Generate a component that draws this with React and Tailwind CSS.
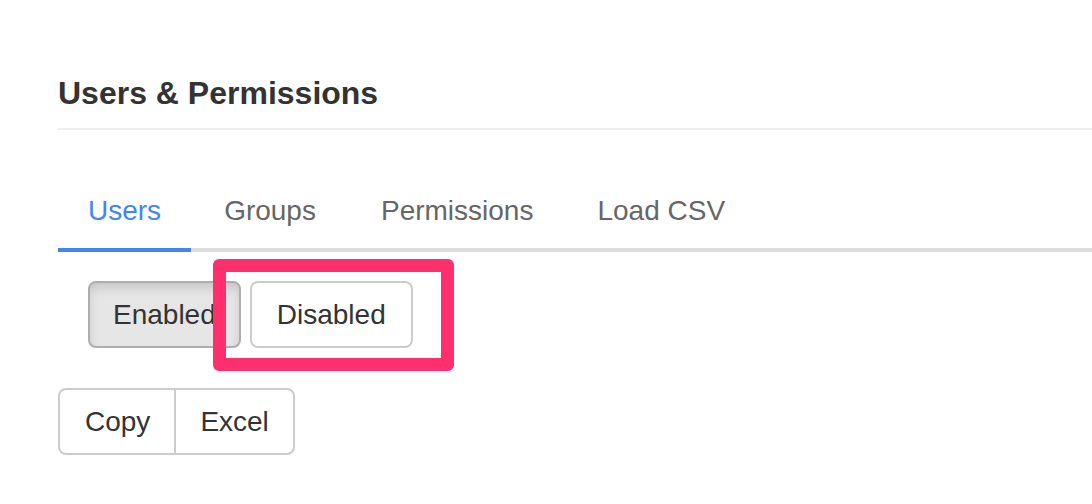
export default function App() {
  const font = { fontFamily: '"Liberation Sans", Arial, Helvetica, sans-serif' };
  return (
    <div className="w-[1092px] h-[504px] bg-white overflow-hidden" style={font}>
      <div className="pl-[58px] pt-[75px]">
        <div className="border-b-2 border-[#eeeeee] pb-[17px]">
          <h1 className="text-[32px] leading-[36px] font-bold text-[#333333]">Users &amp; Permissions</h1>
        </div>

        <div className="mt-[38px] flex border-b-4 border-[#dddddd]">
          <div className="px-[30px] pt-[23px] pb-[17px] text-[28px] leading-[40px] text-[#4285f4] border-b-4 border-[#4285f4] -mb-1">
            Users
          </div>
          <div className="px-[33px] pt-[23px] pb-[17px] text-[28px] leading-[40px] text-[#666666]">Groups</div>
          <div className="px-[32px] pt-[23px] pb-[17px] text-[28px] leading-[40px] text-[#666666]">Permissions</div>
          <div className="px-[32px] pt-[23px] pb-[17px] text-[28px] leading-[40px] text-[#666666]">Load CSV</div>
        </div>

        <div className="relative ml-[30px] mt-[29px] flex">
          <button className="border-2 border-[#adadad] bg-[#e6e6e6] rounded-[8px] px-[23px] py-[11px] text-[28px] leading-[41px] text-[#333333] shadow-[inset_0_6px_10px_rgba(0,0,0,0.125)]">
            Enabled
          </button>
          <button className="ml-[9px] border-2 border-[#cccccc] bg-white rounded-[8px] px-[25px] py-[11px] text-[28px] leading-[41px] text-[#333333]">
            Disabled
          </button>
          <div className="absolute left-[125px] top-[-22px] w-[241px] h-[112px] border-[13px] border-[#ff2e6c] rounded-[6px] pointer-events-none" />
        </div>

        <div className="mt-[40px] flex">
          <button className="border-2 border-[#cccccc] bg-white rounded-l-[8px] pl-[25px] pr-[24px] py-[11px] text-[28px] leading-[41px] text-[#333333]">
            Copy
          </button>
          <button className="-ml-[2px] border-2 border-[#cccccc] bg-white rounded-r-[8px] px-[24px] py-[11px] text-[28px] leading-[41px] text-[#333333]">
            Excel
          </button>
        </div>
      </div>
    </div>
  );
}
